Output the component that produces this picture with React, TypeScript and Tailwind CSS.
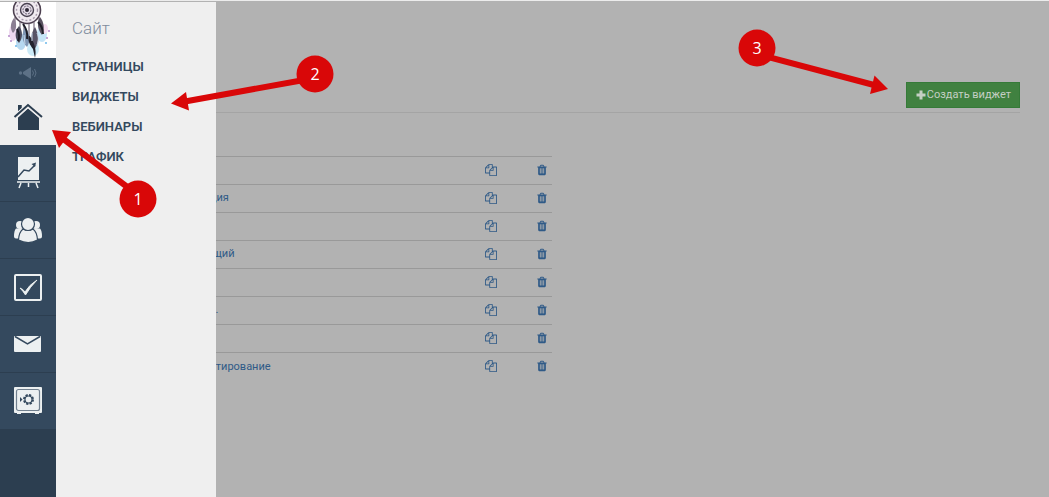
import type { ReactNode } from 'react';

interface Widget {
  id: number;
  title: string;
}

const widgets: Widget[] = [
  { id: 1, title: '' },
  { id: 2, title: 'ция' },
  { id: 3, title: '' },
  { id: 4, title: '\u00a0щий' },
  { id: 5, title: '' },
  { id: 6, title: '\u00a0\u00a0.' },
  { id: 7, title: '' },
  { id: 8, title: 'стирование' },
];

const menu = ['СТРАНИЦЫ', 'ВИДЖЕТЫ', 'ВЕБИНАРЫ', 'ТРАФИК'];

function Avatar() {
  return (
    <svg viewBox="0 0 56 56" className="block h-14 w-14 bg-white" aria-hidden="true">
      <g opacity="0.45">
        <ellipse cx="13" cy="31" rx="4" ry="8" fill="#d9a8e0" />
        <ellipse cx="42" cy="32" rx="5" ry="8" fill="#7fc4ee" />
        <ellipse cx="21" cy="40" rx="5" ry="8" fill="#5fa9e0" />
        <ellipse cx="33" cy="47" rx="6" ry="7" fill="#8fd3f0" />
        <ellipse cx="45" cy="27" rx="3" ry="5" fill="#e7b6df" />
      </g>
      <g fill="#b48ac8">
        <circle cx="9" cy="34" r="1" />
        <circle cx="11" cy="39" r="1" />
        <circle cx="47" cy="36" r="1" />
        <circle cx="49" cy="29" r="1" />
        <circle cx="46" cy="41" r="1" fill="#6cb9ea" />
        <circle cx="16" cy="44" r="1" fill="#6cb9ea" />
      </g>
      <circle cx="27" cy="8" r="13.5" fill="#f0eaf0" stroke="#4d4050" strokeWidth="1.6" />
      <circle cx="27" cy="8" r="10.5" fill="none" stroke="#a79bac" strokeWidth="1.4" strokeDasharray="2 2" />
      <circle cx="27" cy="8" r="6.5" fill="#e4dce8" stroke="#4a4352" strokeWidth="1.4" />
      <circle cx="27" cy="8" r="4" fill="none" stroke="#62596b" strokeWidth="1" strokeDasharray="2 1" />
      <circle cx="27" cy="8" r="2" fill="#2f2937" />
      <path d="M15 15v9M20 19v8M24 21v9M29 21v12M34 19v12M39 15v8" stroke="#645768" strokeWidth="1" />
      <path d="M14 16c-4 5-4 11-1 15 4-4 4-10 1-15z" fill="#8b7f93" />
      <path d="M40 15c-3 5-3 12 2 18 3-6 2-13-2-18z" fill="#5a5261" />
      <path d="M19 24c-5 6-4 13 0 17 4-5 4-12 0-17z" fill="#4c4b5c" />
      <path d="M25 25c-4 7-3 15 2 20 4-6 3-14-2-20z" fill="#7f96b4" />
      <path d="M23 22c3 4 5 9 4 15M17 27c2 4 3 8 1 12M38 20c4 4 5 8 5 12" stroke="#1f1e28" strokeWidth="2" fill="none" />
      <path d="M35 25c-5 8-5 16-1 23 5-6 5-16 1-23z" fill="#575366" />
      <path d="M29 33c-2 5 1 10 4 14l2 9c2-8-1-17-6-23z" fill="#24232e" />
      <path d="M37 31c2 4 2 8 0 12M24 33l1 9M32 31v8" stroke="#c7d8ea" strokeWidth="1" fill="none" />
    </svg>
  );
}

function MegaphoneIcon() {
  return (
    <svg viewBox="0 0 20 14" className="h-3.5 w-5" fill="#5d7186" aria-hidden="true">
      <circle cx="2.500" cy="7" r="1.700" />
      <path d="M5 6 13 1v12L5 8z" />
      <path d="M14.500 4.500q2 2.500 0 5M16.500 3q3 4 0 8" fill="none" stroke="#5d7186" strokeWidth="1" />
    </svg>
  );
}

function HomeIcon() {
  return (
    <svg viewBox="0 0 30 28" className="h-7 w-[30px]" fill="#2c3e50" aria-hidden="true">
      <path d="M5 2h3.500v3L5 8z" />
      <path d="M5 14.500 15 5.500l11 9V27H5z" />
      <path d="M1.500 14.500 15 2l14 12.500" fill="none" stroke="#efefef" strokeWidth="4.500" />
      <path d="M5 2h3.500v3L5 8z" />
      <path d="M1.500 14 15 2l14 12" fill="none" stroke="#2c3e50" strokeWidth="2" />
    </svg>
  );
}

function ChartIcon() {
  return (
    <svg viewBox="0 0 24 34" className="h-[34px] w-6" aria-hidden="true">
      <path fill="#ecf0f1" d="M2 1h21v23H2z" />
      <path d="M2 21 8 14l5 1 6-6" fill="none" stroke="#34495e" strokeWidth="1.500" />
      <path d="M15.500 8 20 6.500 19 11z" fill="#34495e" />
      <path d="M1 26h23M5 27l-2 5M12.500 27v4M20 27l2 5" fill="none" stroke="#ecf0f1" strokeWidth="1.500" />
    </svg>
  );
}

function PeopleIcon() {
  return (
    <svg viewBox="0 0 28 26" className="h-[26px] w-7" fill="#ecf0f1" aria-hidden="true">
      <circle cx="6" cy="8" r="4" />
      <circle cx="22" cy="8" r="4" />
      <path d="M2 11.500h8L7 21.500H2q-2 0-2-2 0-6 2-8zM26 11.500h-8l3 10h5q2 0 2-2 0-6-2-8z" />
      <g stroke="#34495e" strokeWidth="1.200">
        <path d="M9 12q5 3 10 0 4 3 4.500 11-9 5-19 0Q5 15 9 12z" />
        <circle cx="14" cy="7" r="6.500" />
      </g>
    </svg>
  );
}

function CheckIcon() {
  return (
    <svg viewBox="0 0 28 27" className="h-[27px] w-7" aria-hidden="true">
      <rect x="1" y="1" width="26" height="25" rx="1" fill="none" stroke="#ecf0f1" strokeWidth="2" />
      <path d="M6 14q3 1 5 4 4-7 12-12-7 7-11.500 15Q9 17 6 14z" fill="#ecf0f1" stroke="#ecf0f1" strokeWidth="0.900" />
    </svg>
  );
}

function MailIcon() {
  return (
    <svg viewBox="0 0 28 18" className="h-[18px] w-7" aria-hidden="true">
      <rect y="1" width="27" height="16" rx="1" fill="#ecf0f1" />
      <path d="M1 1.500 13.500 9 26 1.500" fill="none" stroke="#34495e" strokeWidth="1.500" />
    </svg>
  );
}

function SafeIcon() {
  return (
    <svg viewBox="0 0 28 28" className="h-7 w-7" aria-hidden="true">
      <rect width="28" height="26" rx="1" fill="#ecf0f1" />
      <path d="M3 25h4v2H3zM21 25h4v2h-4z" fill="#ecf0f1" />
      <rect x="2.500" y="2.500" width="23" height="21" rx="2" fill="none" stroke="#71808f" strokeWidth="1.200" />
      <circle cx="14.500" cy="12.500" r="3.500" fill="none" stroke="#34495e" strokeWidth="1.200" />
      <circle cx="14.500" cy="12.500" r="4.500" fill="none" stroke="#34495e" strokeWidth="2" strokeDasharray="2.200 1.334" />
      <path d="M6 10v5l2.500-2.500z" fill="#34495e" />
    </svg>
  );
}

function CopyIcon() {
  return (
    <svg viewBox="0 0 1792 1792" className="h-3 w-3" fill="currentColor" aria-hidden="true">
      <path d="M1696 384q40 0 68 28t28 68v1216q0 40-28 68t-68 28h-960q-40 0-68-28t-28-68v-288h-544q-40 0-68-28t-28-68v-672q0-40 20-88t48-76l408-408q28-28 76-48t88-20h416q40 0 68 28t28 68v328q68-40 128-40h416zm-544 213l-299 299h299v-299zm-640-384l-299 299h299v-299zm196 647l316-316v-416h-384v416q0 40-28 68t-68 28h-416v640h512v-256q0-40 20-88t48-76zm956 804v-1152h-384v416q0 40-28 68t-68 28h-416v640h896z" />
    </svg>
  );
}

function TrashIcon() {
  return (
    <svg viewBox="0 0 1792 1792" className="h-3 w-3" fill="currentColor" aria-hidden="true">
      <path d="M704 1376v-704q0-14-9-23t-23-9h-64q-14 0-23 9t-9 23v704q0 14 9 23t23 9h64q14 0 23-9t9-23zm256 0v-704q0-14-9-23t-23-9h-64q-14 0-23 9t-9 23v704q0 14 9 23t23 9h64q14 0 23-9t9-23zm256 0v-704q0-14-9-23t-23-9h-64q-14 0-23 9t-9 23v704q0 14 9 23t23 9h64q14 0 23-9t9-23zm-544-992h448l-48-117q-7-9-17-11h-317q-10 2-17 11zm928 32v64q0 14-9 23t-23 9h-96v948q0 83-47 143.500t-113 60.500h-832q-66 0-113-58.500t-47-141.500v-952h-96q-14 0-23-9t-9-23v-64q0-14 9-23t23-9h309l70-167q15-37 54-63t79-26h320q40 0 79 26t54 63l70 167h309q14 0 23 9t9 23z" />
    </svg>
  );
}

function NavItem({ label, children }: { label: string; children: ReactNode }) {
  return (
    <a
      href="#"
      aria-label={label}
      className="flex h-[57px] items-center justify-center border-b border-[#2c3e50] bg-[#34495e]"
    >
      {children}
    </a>
  );
}

// numbered arrows drawn over the whole page
function Callouts() {
  return (
    <svg
      width="1049"
      height="497"
      viewBox="0 0 1049 497"
      className="pointer-events-none absolute top-0 left-0 z-20 font-['Open_Sans',sans-serif] text-base"
      fill="#d90708"
      aria-hidden="true"
    >
      <g stroke="#d90708" strokeWidth="6">
        <path d="M138 194 62 137" />
        <path d="M315 77 185 100.500" />
        <path d="M757 53 874 84" />
      </g>
      <path d="M52 129 71 131 59 147z" />
      <path d="M171 102.500 186 91 189 109.500z" />
      <path d="M888 88 874.500 74.500 870 93z" />
      <circle cx="138" cy="198" r="18.500" />
      <circle cx="315" cy="73" r="18.500" />
      <circle cx="757" cy="47" r="18.500" />
      <g fill="#fff" textAnchor="middle">
        <text x="138" y="204">1</text>
        <text x="315" y="79">2</text>
        <text x="757" y="53">3</text>
      </g>
    </svg>
  );
}

export default function App() {
  return (
    <div className="relative flex min-h-screen flex-col overflow-hidden border-t border-[#ececec] bg-[#b2b2b2] font-['Roboto',sans-serif]">
      <div className="flex flex-1 border-t border-[#b2b2b2]">
        <nav className="z-10 flex w-14 shrink-0 flex-col bg-[#2c3e50]">
          <Avatar />
          <a
            href="#"
            aria-label="Новости"
            className="flex h-[31px] items-center justify-center border-b border-[#2c3e50] bg-[#34495e]"
          >
            <MegaphoneIcon />
          </a>
          <a href="#" aria-label="Сайт" className="flex h-14 items-center justify-center bg-[#efefef]">
            <HomeIcon />
          </a>
          <NavItem label="Статистика"><ChartIcon /></NavItem>
          <NavItem label="Контакты"><PeopleIcon /></NavItem>
          <NavItem label="Задачи"><CheckIcon /></NavItem>
          <NavItem label="Рассылки"><MailIcon /></NavItem>
          <NavItem label="Финансы"><SafeIcon /></NavItem>
        </nav>

        <aside className="z-10 w-40 shrink-0 bg-[#efefef] px-4 pt-3">
          <h2 className="text-[17px] leading-7 font-light text-[#7f8c9d]">Сайт</h2>
          <ul className="pt-2.5">
            {menu.map((item) => (
              <li key={item}>
                <a href="#" className="block text-[13px] leading-[30px] font-semibold text-[#34495e]">
                  {item}
                </a>
              </li>
            ))}
          </ul>
        </aside>

        <main className="-ml-2 min-w-0 flex-1 pt-20 pr-[29px]">
          <div className="flex justify-end border-b border-[#a4a4a4] pb-1">
            <button
              type="button"
              className="flex h-[26px] items-center border border-[#357a38] bg-[#408140] px-2 text-[11px] text-[#c4cfc4]"
            >
              <svg viewBox="0 0 12 12" className="h-3 w-3" fill="currentColor" aria-hidden="true">
                <path d="M4.500 1.500h3v3h3v3h-3v3h-3v-3h-3v-3h3z" />
              </svg>
              Создать виджет
            </button>
          </div>

          <table className="mt-[43px] w-full max-w-[344px] table-fixed border-collapse text-[11px] text-[#2f5a87]">
            <tbody>
              {widgets.map((w) => (
                <tr key={w.id} className="h-7 border-t border-[#999]">
                  <td className="pl-0.5">
                    {w.title && <a href="#">{w.title}</a>}
                  </td>
                  <td className="w-[51px] pb-0.5">
                    <button type="button" aria-label="Копировать" className="block pl-0.5">
                      <CopyIcon />
                    </button>
                  </td>
                  <td className="w-[18px] pb-0.5">
                    <button type="button" aria-label="Удалить" className="block pl-0.5">
                      <TrashIcon />
                    </button>
                  </td>
                </tr>
              ))}
            </tbody>
          </table>
        </main>
      </div>

      <Callouts />
    </div>
  );
}
